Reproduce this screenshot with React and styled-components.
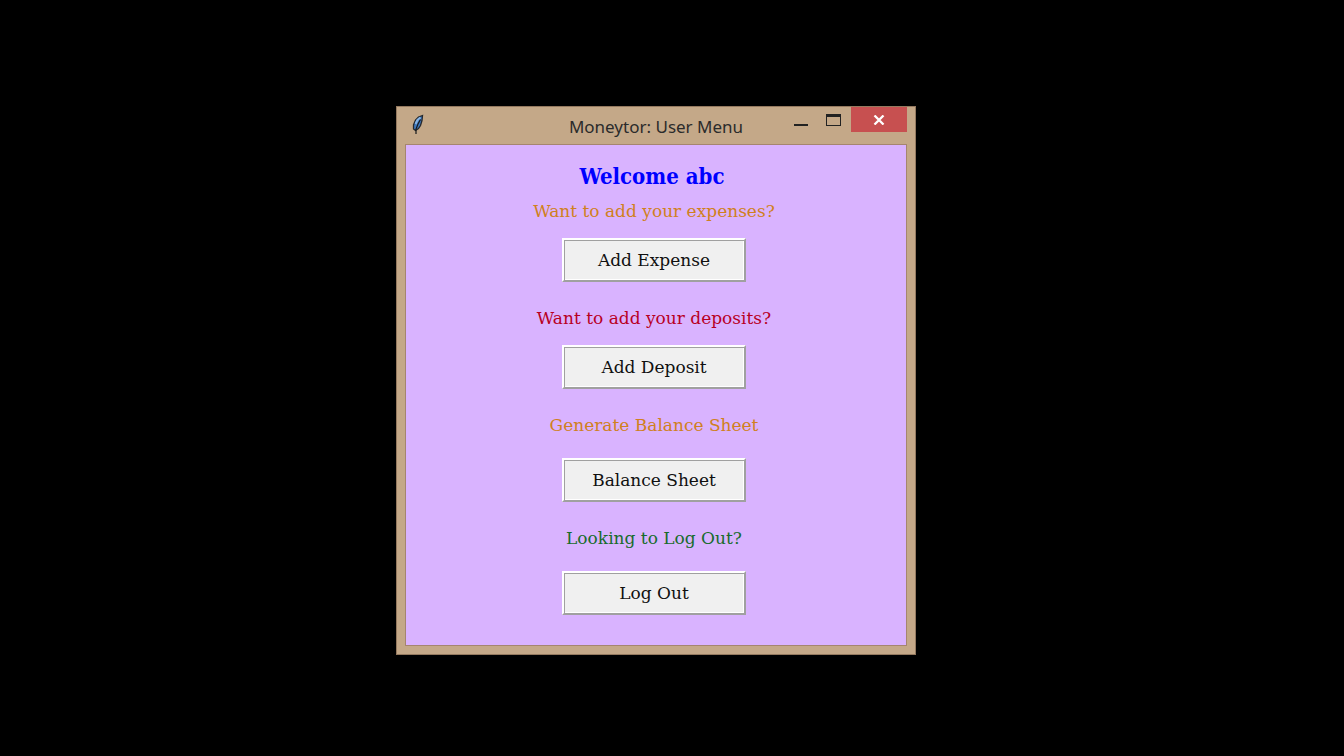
import React from "react";
import styled, { createGlobalStyle } from "styled-components";

const GlobalStyle = createGlobalStyle`
  *, *::before, *::after { box-sizing: border-box; }
  body { margin: 0; background: #000; }
`;

const Desktop = styled.main`
  min-height: 100vh;
  display: flex;
  align-items: center;
  justify-content: center;
  padding: 5px 32px 0 0;
  background: #000;
`;

const Window = styled.section`
  width: 100%;
  max-width: 520px;
  padding: 0 8px 8px;
  border: 1px solid #94795f;
  background: #c4a888;
`;

const TitleBar = styled.header`
  display: grid;
  grid-template-columns: 1fr auto 1fr;
  height: 37px;
`;

const AppIcon = styled.svg`
  width: 16px;
  height: 22px;
  margin: 7px 0 0 5px;
`;

const Title = styled.h1`
  margin: 0;
  padding-top: 8px;
  font: 400 17px/24px "Noto Sans", "Open Sans", sans-serif;
  color: #2b2b2b;
`;

const Controls = styled.div`
  display: flex;
  justify-content: flex-end;
  align-items: flex-start;
`;

const ControlButton = styled.button`
  display: flex;
  align-items: center;
  justify-content: center;
  width: ${(p) => (p.$close ? 56 : 32)}px;
  height: 25px;
  padding: 0;
  border: 0;
  margin-left: ${(p) => (p.$close ? 2 : 0)}px;
  background: ${(p) => (p.$close ? "#c75050" : "transparent")};
`;

const Client = styled.div`
  display: flex;
  flex-direction: column;
  align-items: center;
  padding: 16px 4px 30px 0;
  border: 1px solid #a5856f;
  background: #d9b3ff;
  font-family: "DejaVu Serif", serif;
`;

const Heading = styled.h2`
  margin: 0 0 8px;
  padding-right: 4px;
  font-family: "DejaVu Serif Condensed", "DejaVu Serif", serif;
  font-size: 22px;
  line-height: 30px;
  font-weight: 700;
  color: #0000ff;
`;

const Group = styled.div`
  display: flex;
  flex-direction: column;
  align-items: center;
  gap: ${(p) => (p.$roomy ? 21 : 15)}px;

  & + & { margin-top: 24px; }
`;

const Label = styled.p`
  margin: 0;
  font-size: 17px;
  line-height: 24px;
  color: ${(p) => p.$color};
`;

const MenuButton = styled.button`
  width: 184px;
  height: 44px;
  padding: 0;
  border: solid;
  border-width: 2px;
  border-color: #fff #a0a0a0 #a0a0a0 #fff;
  background: #f0f0f0;
  box-shadow: inset 1px 1px #a0a0a0, inset -1px -1px #fff;
  font: 400 17px/24px "DejaVu Serif", serif;
  color: #101010;
`;

const entries = [
  { label: "Want to add your expenses?", color: "#d08020", action: "Add Expense" },
  { label: "Want to add your deposits?", color: "#b8001f", action: "Add Deposit" },
  { label: "Generate Balance Sheet", color: "#d08020", action: "Balance Sheet", roomy: true },
  { label: "Looking to Log Out?", color: "#176b2c", action: "Log Out", roomy: true },
];

const Feather = () => (
  <AppIcon viewBox="0 0 16 22" aria-hidden="true">
    <path d="M12.500 1.500 8.500 3 5.500 6 3.500 11v4l2 1.500 3-2 2-3 1.500-5z" fill="#3f78bd" stroke="#25282d" strokeWidth="1.300" />
    <path d="M10.500 3.500 7.500 6 5.500 10" fill="none" stroke="#86b4e6" strokeWidth="2" />
    <path d="M10.500 5.500 8 10 6 15v5" fill="none" stroke="#17191c" strokeWidth="1.200" />
  </AppIcon>
);

export default function App() {
  return (
    <>
      <GlobalStyle />
      <Desktop>
        <Window>
          <TitleBar>
            <Feather />
            <Title>Moneytor: User Menu</Title>
            <Controls>
              <ControlButton aria-label="Minimize">
                <svg width="14" height="12"><path d="M0 10h14v2H0z" fill="#222" /></svg>
              </ControlButton>
              <ControlButton aria-label="Maximize">
                <svg width="15" height="12"><path fillRule="evenodd" d="M0 0h15v12H0zM1 3v8h13V3z" fill="#222" /></svg>
              </ControlButton>
              <ControlButton $close aria-label="Close">
                <svg width="12" height="10" viewBox="0 0 12 10"><path d="M1.500 .5 10.500 9.500M10.500 .5 1.500 9.500" stroke="#fff" strokeWidth="2.300" /></svg>
              </ControlButton>
            </Controls>
          </TitleBar>
          <Client>
            <Heading>Welcome abc</Heading>
            {entries.map((e) => (
              <Group key={e.action} $roomy={e.roomy}>
                <Label $color={e.color}>{e.label}</Label>
                <MenuButton>{e.action}</MenuButton>
              </Group>
            ))}
          </Client>
        </Window>
      </Desktop>
    </>
  );
}
